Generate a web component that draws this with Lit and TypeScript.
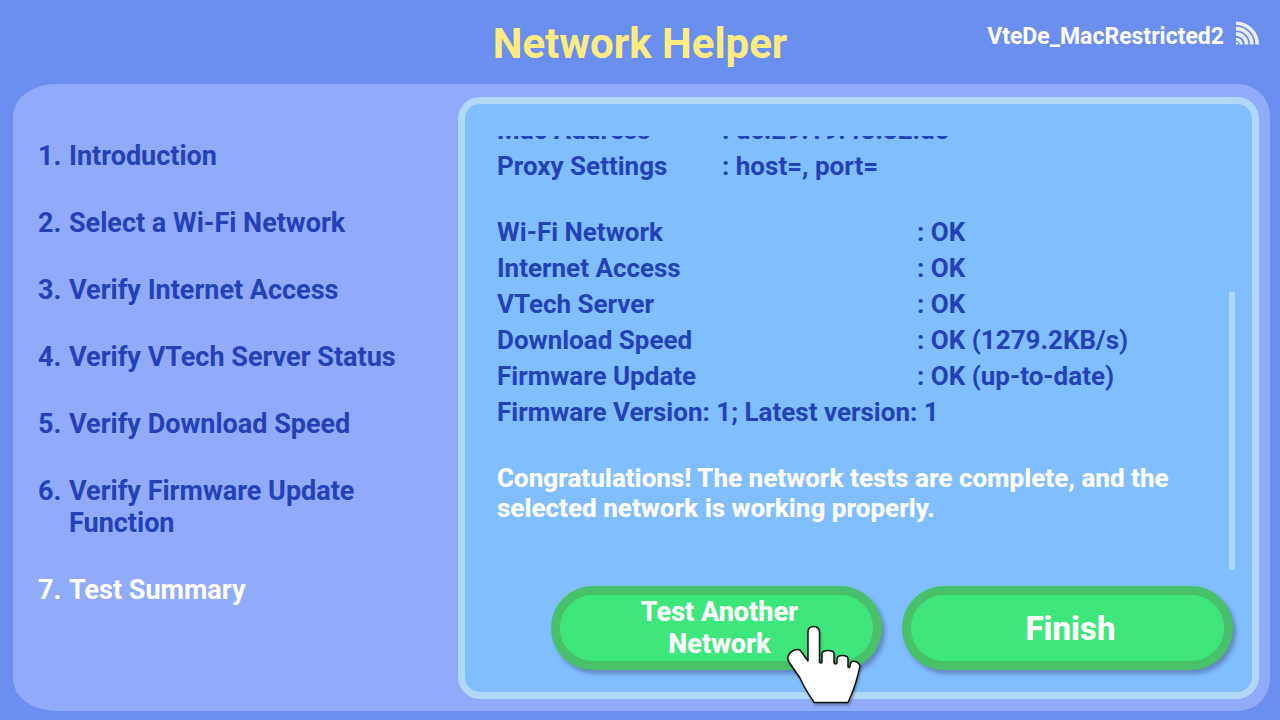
import { LitElement, html, css, svg } from "lit";
import { customElement, property } from "lit/decorators.js";
import { classMap } from "lit/directives/class-map.js";

const STEPS = [
  "Introduction",
  "Select a Wi-Fi Network",
  "Verify Internet Access",
  "Verify VTech Server Status",
  "Verify Download Speed",
  "Verify Firmware Update Function",
  "Test Summary",
];

const DEVICE: [string, string][] = [
  ["Mac Address", "dc:29:19:48:82:de"],
  ["Proxy Settings", "host=, port="],
];

const RESULTS: [string, string][] = [
  ["Wi-Fi Network", "OK"],
  ["Internet Access", "OK"],
  ["VTech Server", "OK"],
  ["Download Speed", "OK (1279.2KB/s)"],
  ["Firmware Update", "OK (up-to-date)"],
];

@customElement("step-list")
class StepList extends LitElement {
  @property({ type: Number }) current = 0;

  static styles = css`
    :host {
      display: block;
    }
    .steps {
      list-style: none;
      margin: 0;
      padding: 0;
      display: flex;
      flex-direction: column;
      gap: 35px;
      font-size: 27px;
      line-height: 32px;
      font-weight: 700;
      color: #2342b8;
    }
    .step {
      display: grid;
      grid-template-columns: 31px 1fr;
    }
    .current {
      color: #fff;
    }
  `;

  render() {
    return html`<ol class="steps">
      ${STEPS.map(
        (s, i) => html`<li
          class=${classMap({ step: true, current: i === this.current })}
          aria-current=${i === this.current ? "step" : "false"}
        >
          <span>${i + 1}.</span><span>${s}</span>
        </li>`
      )}
    </ol>`;
  }
}

@customElement("test-report")
class TestReport extends LitElement {
  static styles = css`
    :host {
      display: flex;
      justify-content: space-between;
      min-height: 0;
      font-size: 26px;
      font-weight: 700;
      color: #2342b8;
    }
    .view {
      flex: 1;
      display: flex;
      flex-direction: column;
      justify-content: flex-end;
      overflow: hidden;
    }
    .rows {
      border-collapse: collapse;
      table-layout: fixed;
      width: 100%;
      margin-bottom: 30px;
      line-height: 36px;
    }
    .results {
      margin-bottom: 0;
    }
    .rows th,
    .rows td {
      padding: 0;
      text-align: left;
      font-weight: inherit;
    }
    .device th {
      width: 225px;
    }
    .results th {
      width: 420px;
    }
    .version {
      margin: 0 0 33px;
      line-height: 36px;
    }
    .verdict {
      margin: 0 0 47px;
      line-height: 30px;
      font-weight: 800;
      color: #fff;
    }
    .track {
      width: 6px;
      display: flex;
      flex-direction: column;
      justify-content: flex-end;
    }
    .thumb {
      background: #afd7ff;
    }
  `;

  private table(kind: string, rows: [string, string][]) {
    return html`<table class="rows ${kind}">
      <tbody>
        ${rows.map(([k, v]) => html`<tr><th scope="row">${k}</th><td>: ${v}</td></tr>`)}
      </tbody>
    </table>`;
  }

  render() {
    return html`
      <div class="view">
        ${this.table("device", DEVICE)} ${this.table("results", RESULTS)}
        <p class="version">Firmware Version: 1; Latest version: 1</p>
        <p class="verdict">
          Congratulations! The network tests are complete, and the selected network is working
          properly.
        </p>
      </div>
      <div class="track"><div class="thumb" style="height:64%"></div></div>
    `;
  }
}

const signalIcon = svg`
  <g fill="none" stroke="#fff" stroke-opacity="0.85" stroke-width="3.6">
    <path d="M0 2.3A21.2 21.2 0 0 1 21.2 23.500"/>
    <path d="M0 7.6A15.9 15.9 0 0 1 15.9 23.500"/>
    <path d="M0 12.9A10.6 10.6 0 0 1 10.6 23.500"/>
    <path d="M0 18.2A5.3 5.3 0 0 1 5.3 23.500" stroke-width="3"/>
  </g>
  <path d="M0 21A2.500 2.500 0 0 1 2.500 23.500H0Z" fill="#fff" fill-opacity="0.85"/>`;

@customElement("app-root")
class AppRoot extends LitElement {
  static styles = css`
    :host {
      display: flex;
      flex-direction: column;
      box-sizing: border-box;
      height: 100vh;
      padding: 0 10px 9px 13px;
      background: #6b8fee;
      font-family: Roboto, "Liberation Sans", sans-serif;
    }
    .header {
      display: grid;
      grid-template-columns: 1fr auto 1fr;
      height: 84px;
      padding-left: 7px;
      padding-right: 10px;
    }
    .title {
      grid-column: 2;
      margin: 0;
      padding-top: 20px;
      font-size: 42px;
      line-height: 48px;
      font-weight: 700;
      color: #ffec80;
    }
    .network {
      display: flex;
      justify-content: flex-end;
      gap: 12px;
      padding-top: 21px;
      font-size: 23px;
      line-height: 32px;
      font-weight: 700;
      color: #fff;
    }
    .panel {
      flex: 1;
      min-height: 0;
      display: grid;
      grid-template-columns: minmax(0, 445fr) minmax(0, 801fr);
      grid-template-rows: minmax(0, 1fr);
      box-sizing: border-box;
      padding: 13px 11px 12px 0;
      border-radius: 43px 32px 32px 43px / 32px;
      background: #90abf9;
    }
    .side {
      padding: 43px 20px 0 25px;
    }
    .screen {
      display: flex;
      flex-direction: column;
      box-sizing: border-box;
      border: 7px solid #b0d8f8;
      border-radius: 22px;
      padding: 32px 17px 22px 32px;
      background: #80beff;
    }
    .report {
      flex: 1;
    }
    .actions {
      display: flex;
      justify-content: flex-end;
      gap: 20px;
      padding: 16px 2px 0 0;
    }
    .slot {
      position: relative;
      display: flex;
      flex: 0 1 331px;
    }
    .action {
      flex: 1;
      height: 84px;
      padding: 0 60px 0 66px;
      border: 9px solid #49c16a;
      border-radius: 42px;
      background: #3fe67c;
      box-shadow: 3px 4px 4px rgba(60, 70, 110, 0.45);
      color: #fff;
      font-family: inherit;
      font-weight: 800;
      font-size: 27px;
      line-height: 32px;
    }
    .big {
      padding-top: 2px;
      font-size: 33px;
    }
    .pointer {
      position: absolute;
      left: 235px;
      top: 38px;
      filter: drop-shadow(1px 2px 1px rgba(0, 0, 0, 0.3));
      pointer-events: none;
    }
  `;

  render() {
    return html`
      <header class="header">
        <h1 class="title">Network Helper</h1>
        <div class="network">
          <span>VteDe_MacRestricted2</span>
          <svg width="24" height="25" viewBox="0 0 24 25" aria-hidden="true">${signalIcon}</svg>
        </div>
      </header>
      <main class="panel">
        <nav class="side"><step-list .current=${6}></step-list></nav>
        <section class="screen">
          <test-report class="report"></test-report>
          <div class="actions">
            <div class="slot">
              <button class="action">Test Another Network</button>
              <svg class="pointer" width="76" height="80" viewBox="0 0 76 80" aria-hidden="true">
                <path
                  d="M27 76.500Q20 67 14 54L3 38C-1 31 7 24 14 26L22 37V8Q22 2.500 27.500 2.500T33.500 8V38Q35.500 40 36 38V30Q36 26.500 42 26.500T48 30V39Q50 41 51 39V35Q51 31.500 56.500 31.500T62 35V43Q64 45 64.500 40Q65 36.500 69 37.500T74 42Q70 62 62 78.500H28Z"
                  fill="#fff" stroke="#111" stroke-width="1.500" stroke-linejoin="round"/>
              </svg>
            </div>
            <div class="slot"><button class="action big">Finish</button></div>
          </div>
        </section>
      </main>
    `;
  }
}
